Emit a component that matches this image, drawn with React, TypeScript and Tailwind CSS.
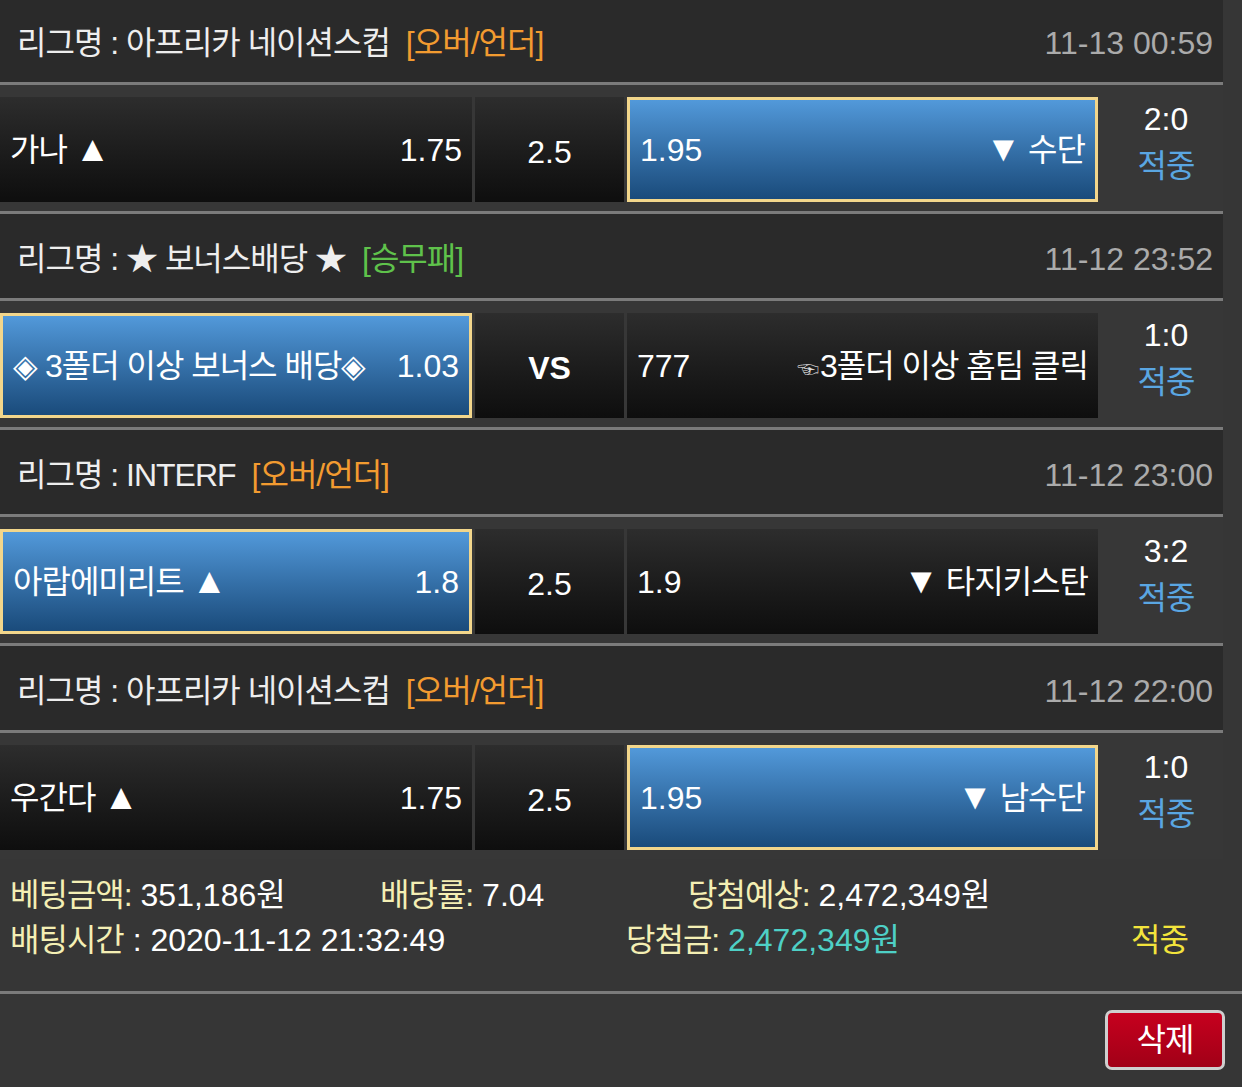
import clsx from 'clsx';
import type { ReactNode } from 'react';

type Match = {
  league: string;
  tag: string;
  tagClass: string;
  date: string;
  home: string;
  homeOdds: string;
  mid: string;
  awayOdds: string;
  away: string;
  hand?: boolean;
  pick: 'home' | 'away';
  score: string;
};

const matches: Match[] = [
  {
    league: '아프리카 네이션스컵',
    tag: '[오버/언더]',
    tagClass: 'text-[#f29b30]',
    date: '11-13 00:59',
    home: '가나 ▲',
    homeOdds: '1.75',
    mid: '2.5',
    awayOdds: '1.95',
    away: '▼ 수단',
    pick: 'away',
    score: '2:0',
  },
  {
    league: '★ 보너스배당 ★',
    tag: '[승무패]',
    tagClass: 'text-[#5fc24b]',
    date: '11-12 23:52',
    home: '◈ 3폴더 이상 보너스 배당◈',
    homeOdds: '1.03',
    mid: 'VS',
    awayOdds: '777',
    away: '3폴더 이상 홈팀 클릭',
    hand: true,
    pick: 'home',
    score: '1:0',
  },
  {
    league: 'INTERF',
    tag: '[오버/언더]',
    tagClass: 'text-[#f29b30]',
    date: '11-12 23:00',
    home: '아랍에미리트 ▲',
    homeOdds: '1.8',
    mid: '2.5',
    awayOdds: '1.9',
    away: '▼ 타지키스탄',
    pick: 'home',
    score: '3:2',
  },
  {
    league: '아프리카 네이션스컵',
    tag: '[오버/언더]',
    tagClass: 'text-[#f29b30]',
    date: '11-12 22:00',
    home: '우간다 ▲',
    homeOdds: '1.75',
    mid: '2.5',
    awayOdds: '1.95',
    away: '▼ 남수단',
    pick: 'away',
    score: '1:0',
  },
];

// 팀명 안의 ▲ ▼ 는 조금 더 크게 보여준다
function TeamName({ text }: { text: string }) {
  const parts = text.split(/([▲▼])/);
  return (
    <>
      {parts.map((p, i) =>
        p === '▲' || p === '▼' ? (
          <span key={i} className="text-[36px] leading-none">
            {p}
          </span>
        ) : (
          <span key={i}>{p}</span>
        ),
      )}
    </>
  );
}

function Cell({ selected, className, children }: { selected?: boolean; className?: string; children: ReactNode }) {
  return (
    <div
      className={clsx(
        'flex h-full items-center px-[10px] text-white',
        selected
          ? 'border-[3px] border-[#f2d68b] bg-gradient-to-b from-[#5299da] to-[#1a4b7b]'
          : 'bg-gradient-to-b from-[#2d2d2d] to-[#0e0e0e]',
        className,
      )}
    >
      {children}
    </div>
  );
}

function MatchBlock({ match, last }: { match: Match; last: boolean }) {
  return (
    <div>
      <div className="flex h-[84px] items-center justify-between bg-[#2a2a2a] pt-[5px] pr-[10px] pl-[17px]">
        <div className="flex items-center text-[#eeeeee]">
          <span className="tracking-[-1px]">리그명 : {match.league}</span>
          <span className={clsx('ml-[16px] tracking-[-1px]', match.tagClass)}>{match.tag}</span>
        </div>
        <span className="text-[#ababab]">{match.date}</span>
      </div>
      <div className="h-[3px] bg-[#7b7b7b]" />

      <div className="flex h-[126px] gap-[3px] bg-[#373737] pt-[12px] pb-[9px]">
        <Cell selected={match.pick === 'home'} className="w-[472px] justify-between">
          <span className="whitespace-pre tracking-[-1px]">
            <TeamName text={match.home} />
          </span>
          <span>{match.homeOdds}</span>
        </Cell>
        <Cell className={clsx('w-[149px] justify-center pt-[4px]', match.mid === 'VS' && 'font-bold')}>
          {match.mid}
        </Cell>
        <Cell selected={match.pick === 'away'} className="w-[471px] justify-between">
          <span>{match.awayOdds}</span>
          <span className="whitespace-pre tracking-[-1px]">
            {match.hand && <span className="mr-[2px] text-[22px] text-[#d8d8d8]">☜</span>}
            <TeamName text={match.away} />
          </span>
        </Cell>
        <div className="flex flex-1 flex-col items-center pl-[8px] leading-[44px]">
          <span className="text-white">{match.score}</span>
          <span className="mt-[3px] tracking-[-1px] text-[#5aa6e2]">적중</span>
        </div>
      </div>
      {!last && <div className="h-[3px] bg-[#7b7b7b]" />}
    </div>
  );
}

export default function App() {
  return (
    <div className="min-h-[1087px] w-full overflow-hidden bg-[#363636] font-['Liberation_Sans','Noto_Sans_CJK_KR',sans-serif] text-[32px]">
      <div className="-mt-[2px] w-[1223px]">
        {matches.map((m, i) => (
          <MatchBlock key={i} match={m} last={i === matches.length - 1} />
        ))}
      </div>

      <div className="h-[132px] pt-[14px] pl-[10px] leading-[45px] text-white">
        <div className="flex">
          <div className="w-[370px]">
            <span className="tracking-[-1px] text-[#f4efb4]">베팅금액:</span> 351,186원
          </div>
          <div className="w-[308px]">
            <span className="tracking-[-1px] text-[#f4efb4]">배당률:</span> 7.04
          </div>
          <div>
            <span className="tracking-[-1px] text-[#f4efb4]">당첨예상:</span> 2,472,349원
          </div>
        </div>
        <div className="flex">
          <div className="w-[616px]">
            <span className="tracking-[-1px] text-[#f4efb4]">배팅시간</span> : 2020-11-12 21:32:49
          </div>
          <div className="w-[505px]">
            <span className="tracking-[-1px] text-[#f4efb4]">당첨금:</span>{' '}
            <span className="text-[#4ed0c6]">2,472,349원</span>
          </div>
          <div className="tracking-[-1px] text-[#f3e43c]">적중</div>
        </div>
      </div>
      <div className="h-[3px] bg-[#7b7b7b]" />

      <div className="flex h-[93px] justify-end pt-[16px] pr-[17px]">
        <button className="h-[60px] w-[120px] rounded-[7px] border-[3px] border-[#cfcfcf] bg-gradient-to-b from-[#c6001e] to-[#a10017] tracking-[-1px] text-white">
          삭제
        </button>
      </div>
    </div>
  );
}
